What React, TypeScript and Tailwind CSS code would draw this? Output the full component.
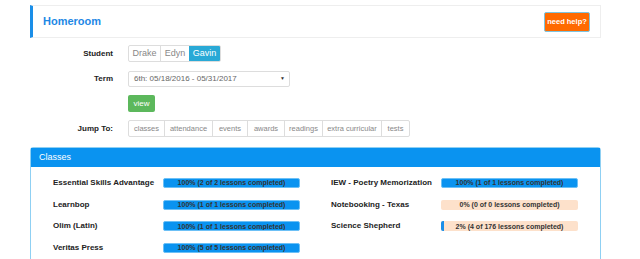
import React from 'react';

const classes = [
    { name: 'Essential Skills Advantage', pct: 100, done: 2, total: 2 },
    { name: 'IEW - Poetry Memorization', pct: 100, done: 1, total: 1 },
    { name: 'Learnbop', pct: 100, done: 1, total: 1 },
    { name: 'Notebooking - Texas', pct: 0, done: 0, total: 0 },
    { name: 'Olim (Latin)', pct: 100, done: 1, total: 1 },
    { name: 'Science Shepherd', pct: 2, done: 4, total: 176 },
    { name: 'Veritas Press', pct: 100, done: 5, total: 5 },
];

const jumps = [
    { label: 'classes', w: 'w-[36px]' },
    { label: 'attendance', w: 'w-[48px]' },
    { label: 'events', w: 'w-[35px]' },
    { label: 'awards', w: 'w-[37px]' },
    { label: 'readings', w: 'w-[38px]' },
    { label: 'extra curricular', w: 'w-[59px]' },
    { label: 'tests', w: 'w-[27px]' },
];

function ProgressBar({ pct, done, total }: { pct: number; done: number; total: number }) {
    const full = pct >= 100;
    return (
        <div
            className={`relative w-[137px] h-[10px] rounded-[2px] overflow-hidden ${full ? 'bg-[#0a93f0] border border-[#6cc0f6]' : 'bg-[#fde1cb]'}`}
        >
            {!full && pct > 0 && (
                <div className="absolute left-0 top-0 h-full bg-[#1a8ee8]" style={{ width: `${Math.max(pct, 1.5)}%` }} />
            )}
            <div className="relative flex items-center justify-center h-full text-[7px] font-bold text-[#333] leading-none">
                {pct}% ({done} of {total} lessons completed)
            </div>
        </div>
    );
}

export default function App() {
    return (
        <div className="w-[640px] h-[259px] overflow-hidden bg-white" style={{ fontFamily: '"Liberation Sans", Arial, sans-serif' }}>
            <div className="ml-[30px] w-[571px] pt-[5px]">
                {/* Header */}
                <div className="h-[33px] flex items-center justify-between border border-[#eeeeee] border-l-[3px] border-l-[#1a8ee8] pl-[10px] pr-[10px]">
                    <span className="text-[11px] font-bold text-[#1e88e5]">Homeroom</span>
                    <button className="w-[46px] h-[20px] bg-[#ff6a00] border border-[#7cc4e0] rounded-[2px] text-white text-[7.5px] font-bold whitespace-nowrap">
                        need help?
                    </button>
                </div>

                {/* Form */}
                <div className="mt-[7px] flex flex-col">
                    <div className="flex items-center h-[17px]">
                        <div className="w-[83px] text-right text-[8px] font-bold text-[#222]">Student</div>
                        <div className="ml-[15px] flex h-[17px] text-[9px] rounded-[2px] overflow-hidden border border-[#ddd]">
                            <div className="w-[32px] flex items-center justify-center text-[#888] border-r border-[#ddd]">Drake</div>
                            <div className="w-[28px] flex items-center justify-center text-[#888]">Edyn</div>
                            <div className="w-[31px] flex items-center justify-center bg-[#29a9d6] text-white">Gavin</div>
                        </div>
                    </div>
                    <div className="flex items-center h-[16px] mt-[9px]">
                        <div className="w-[83px] text-right text-[8px] font-bold text-[#222]">Term</div>
                        <div className="ml-[15px] w-[162px] h-[16px] border border-[#ddd] rounded-[2px] flex items-center justify-between pl-[5px] pr-[4px] text-[8px] text-[#666]">
                            <span>6th: 05/18/2016 - 05/31/2017</span>
                            <span className="text-[5px] text-[#333]">▼</span>
                        </div>
                    </div>
                    <div className="flex items-center h-[17px] mt-[8px]">
                        <div className="w-[83px]" />
                        <div className="ml-[15px] w-[27px] h-[17px] bg-[#5cb85c] rounded-[2px] flex items-center justify-center text-white text-[8px]">view</div>
                    </div>
                    <div className="flex items-center h-[17px] mt-[8px]">
                        <div className="w-[83px] text-right text-[8px] font-bold text-[#222]">Jump To:</div>
                        <div className="ml-[15px] flex h-[17px] border border-[#ddd] rounded-[2px] text-[7.5px] text-[#888]">
                            {jumps.map((j, i) => (
                                <div
                                    key={j.label}
                                    className={`flex items-center justify-center whitespace-nowrap ${j.w} ${i < jumps.length - 1 ? 'border-r border-[#ddd]' : ''}`}
                                >
                                    {j.label}
                                </div>
                            ))}
                        </div>
                    </div>
                </div>

                {/* Classes panel */}
                <div className="mt-[10px] border border-[#8fd0f3] rounded-t-[3px] h-[120px]">
                    <div className="h-[19px] bg-[#0a93f0] flex items-center pl-[8px] text-white text-[9px]">Classes</div>
                    <div className="pt-[5px] pl-[22px] grid grid-cols-[278px_1fr]">
                        {classes.map((c) => (
                            <div key={c.name} className="h-[21.7px] flex items-center">
                                <div className="w-[110px] text-[8px] font-bold text-[#222]">{c.name}</div>
                                <ProgressBar pct={c.pct} done={c.done} total={c.total} />
                            </div>
                        ))}
                    </div>
                </div>
            </div>
        </div>
    );
}
